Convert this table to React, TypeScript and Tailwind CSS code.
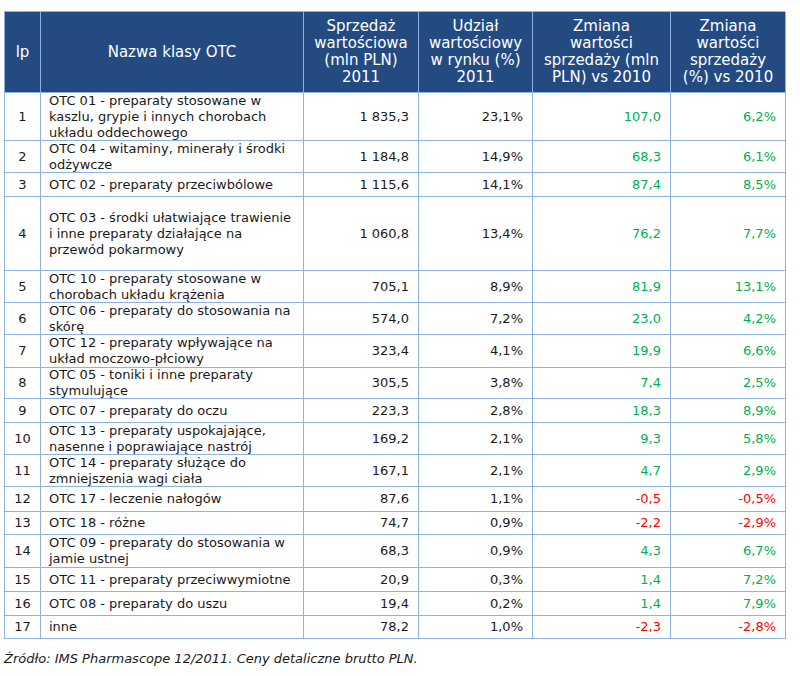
const ROWS = [
  { lp: 1, name: ["OTC 01 - preparaty stosowane w", "kaszlu, grypie i innych chorobach", "układu oddechowego"], sales: "1 835,3", share: "23,1%", chg: "107,0", chgPct: "6,2%", h: "h-[48px]" },
  { lp: 2, name: ["OTC 04 - witaminy, minerały i środki", "odżywcze"], sales: "1 184,8", share: "14,9%", chg: "68,3", chgPct: "6,1%", h: "h-[32px]" },
  { lp: 3, name: ["OTC 02 - preparaty przeciwbólowe"], sales: "1 115,6", share: "14,1%", chg: "87,4", chgPct: "8,5%", h: "h-[24px]" },
  { lp: 4, name: ["OTC 03 - środki ułatwiające trawienie", "i inne preparaty działające na", "przewód pokarmowy"], sales: "1 060,8", share: "13,4%", chg: "76,2", chgPct: "7,7%", h: "h-[74px]" },
  { lp: 5, name: ["OTC 10 - preparaty stosowane w", "chorobach układu krążenia"], sales: "705,1", share: "8,9%", chg: "81,9", chgPct: "13,1%", h: "h-[32px]" },
  { lp: 6, name: ["OTC 06 - preparaty do stosowania na", "skórę"], sales: "574,0", share: "7,2%", chg: "23,0", chgPct: "4,2%", h: "h-[32px]" },
  { lp: 7, name: ["OTC 12 - preparaty wpływające na", "układ moczowo-płciowy"], sales: "323,4", share: "4,1%", chg: "19,9", chgPct: "6,6%", h: "h-[33px]" },
  { lp: 8, name: ["OTC 05 - toniki i inne preparaty", "stymulujące"], sales: "305,5", share: "3,8%", chg: "7,4", chgPct: "2,5%", h: "h-[31px]" },
  { lp: 9, name: ["OTC 07 - preparaty do oczu"], sales: "223,3", share: "2,8%", chg: "18,3", chgPct: "8,9%", h: "h-[24px]" },
  { lp: 10, name: ["OTC 13 - preparaty uspokajające,", "nasenne i poprawiające nastrój"], sales: "169,2", share: "2,1%", chg: "9,3", chgPct: "5,8%", h: "h-[32px]" },
  { lp: 11, name: ["OTC 14 - preparaty służące do", "zmniejszenia wagi ciała"], sales: "167,1", share: "2,1%", chg: "4,7", chgPct: "2,9%", h: "h-[32px]" },
  { lp: 12, name: ["OTC 17 - leczenie nałogów"], sales: "87,6", share: "1,1%", chg: "-0,5", chgPct: "-0,5%", h: "h-[25px]" },
  { lp: 13, name: ["OTC 18 - różne"], sales: "74,7", share: "0,9%", chg: "-2,2", chgPct: "-2,9%", h: "h-[23px]" },
  { lp: 14, name: ["OTC 09 - preparaty do stosowania w", "jamie ustnej"], sales: "68,3", share: "0,9%", chg: "4,3", chgPct: "6,7%", h: "h-[33px]" },
  { lp: 15, name: ["OTC 11 - preparaty przeciwwymiotne"], sales: "20,9", share: "0,3%", chg: "1,4", chgPct: "7,2%", h: "h-[24px]" },
  { lp: 16, name: ["OTC 08 - preparaty do uszu"], sales: "19,4", share: "0,2%", chg: "1,4", chgPct: "7,9%", h: "h-[24px]" },
  { lp: 17, name: ["inne"], sales: "78,2", share: "1,0%", chg: "-2,3", chgPct: "-2,8%", h: "h-[23px]" },
];

const HEADERS = [
  ["lp"],
  ["Nazwa klasy OTC"],
  ["Sprzedaż", "wartościowa", "(mln PLN)", "2011"],
  ["Udział", "wartościowy", "w rynku (%)", "2011"],
  ["Zmiana", "wartości", "sprzedaży (mln", "PLN) vs 2010"],
  ["Zmiana", "wartości", "sprzedaży", "(%) vs 2010"],
];

function Lines({ lines }: { lines: string[] }) {
  return (
    <div>
      {lines.map((l, i) => (
        <div key={i}>{l}</div>
      ))}
    </div>
  );
}

export default function App() {
  const cell = "border-r border-b border-[#8db3e2] flex items-center";
  return (
    <div className="w-[800px] h-[676px] bg-white pt-[11px] pl-[4px] font-['DejaVu_Sans',Verdana,sans-serif] text-[13px] text-[#1a1a1a]">
      <div className="w-[781px] grid grid-cols-[36px_263px_115px_114px_138px_115px] border-l border-t border-[#8db3e2]">
        {HEADERS.map((lines, i) => (
          <div
            key={i}
            className="h-[81px] bg-[#234b82] text-white text-[15px] leading-[17px] border-r border-b border-[#8db3e2] flex items-center justify-center text-center px-1"
          >
            <Lines lines={lines} />
          </div>
        ))}
        {ROWS.map((r) => {
          const tone = r.chg.startsWith("-") ? "text-[#ff0000]" : "text-[#00b050]";
          return [
            <div key={r.lp + "a"} className={`${cell} ${r.h} justify-center leading-[16px]`}>{r.lp}</div>,
            <div key={r.lp + "b"} className={`${cell} ${r.h} pl-[8px] leading-[16px] whitespace-nowrap`}>
              <Lines lines={r.name} />
            </div>,
            <div key={r.lp + "c"} className={`${cell} ${r.h} justify-end pr-[9px]`}>{r.sales}</div>,
            <div key={r.lp + "d"} className={`${cell} ${r.h} justify-end pr-[9px]`}>{r.share}</div>,
            <div key={r.lp + "e"} className={`${cell} ${r.h} justify-end pr-[9px] ${tone}`}>{r.chg}</div>,
            <div key={r.lp + "f"} className={`${cell} ${r.h} justify-end pr-[9px] ${tone}`}>{r.chgPct}</div>,
          ];
        })}
      </div>
      <p className="mt-[10px] italic text-[13px]">
        Źródło: IMS Pharmascope 12/2011. Ceny detaliczne brutto PLN.
      </p>
    </div>
  );
}
